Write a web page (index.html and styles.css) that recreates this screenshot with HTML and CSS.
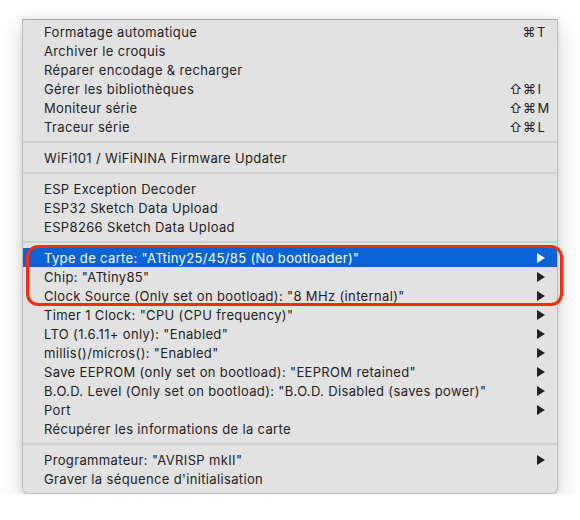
FILE: index.html
```html
<!DOCTYPE html>
<html lang="fr">
<head>
<meta charset="utf-8">
<title>Menu Outils</title>
<link rel="stylesheet" href="styles.css">
</head>
<body>
<div class="menu">
  <div class="item"><span class="label">Formatage automatique</span><span class="key"><span class="mods">⌘</span><span class="k">T</span></span></div>
  <div class="item"><span class="label">Archiver le croquis</span></div>
  <div class="item"><span class="label">Réparer encodage &amp; recharger</span></div>
  <div class="item"><span class="label">Gérer les bibliothèques</span><span class="key"><span class="mods">⇧⌘</span><span class="k">I</span></span></div>
  <div class="item"><span class="label">Moniteur série</span><span class="key"><span class="mods">⇧⌘</span><span class="k">M</span></span></div>
  <div class="item"><span class="label">Traceur série</span><span class="key"><span class="mods">⇧⌘</span><span class="k">L</span></span></div>
  <div class="sep"></div>
  <div class="item"><span class="label">WiFi101 / WiFiNINA Firmware Updater</span></div>
  <div class="sep"></div>
  <div class="item"><span class="label">ESP Exception Decoder</span></div>
  <div class="item"><span class="label">ESP32 Sketch Data Upload</span></div>
  <div class="item"><span class="label">ESP8266 Sketch Data Upload</span></div>
  <div class="sep"></div>
  <div class="group">
    <div class="item active"><span class="label">Type de carte: "ATtiny25/45/85 (No bootloader)"</span><svg class="arrow" viewBox="0 0 8 10"><path d="M0 0L8 5L0 10Z"/></svg></div>
    <div class="item"><span class="label">Chip: "ATtiny85"</span><svg class="arrow" viewBox="0 0 8 10"><path d="M0 0L8 5L0 10Z"/></svg></div>
    <div class="item"><span class="label">Clock Source (Only set on bootload): "8 MHz (internal)"</span><svg class="arrow" viewBox="0 0 8 10"><path d="M0 0L8 5L0 10Z"/></svg></div>
  </div>
  <div class="item"><span class="label">Timer 1 Clock: "CPU (CPU frequency)"</span><svg class="arrow" viewBox="0 0 8 10"><path d="M0 0L8 5L0 10Z"/></svg></div>
  <div class="item"><span class="label">LTO (1.6.11+ only): "Enabled"</span><svg class="arrow" viewBox="0 0 8 10"><path d="M0 0L8 5L0 10Z"/></svg></div>
  <div class="item"><span class="label">millis()/micros(): "Enabled"</span><svg class="arrow" viewBox="0 0 8 10"><path d="M0 0L8 5L0 10Z"/></svg></div>
  <div class="item"><span class="label">Save EEPROM (only set on bootload): "EEPROM retained"</span><svg class="arrow" viewBox="0 0 8 10"><path d="M0 0L8 5L0 10Z"/></svg></div>
  <div class="item"><span class="label">B.O.D. Level (Only set on bootload): "B.O.D. Disabled (saves power)"</span><svg class="arrow" viewBox="0 0 8 10"><path d="M0 0L8 5L0 10Z"/></svg></div>
  <div class="item"><span class="label">Port</span><svg class="arrow" viewBox="0 0 8 10"><path d="M0 0L8 5L0 10Z"/></svg></div>
  <div class="item"><span class="label">Récupérer les informations de la carte</span></div>
  <div class="sep"></div>
  <div class="item"><span class="label">Programmateur: "AVRISP mkII"</span><svg class="arrow" viewBox="0 0 8 10"><path d="M0 0L8 5L0 10Z"/></svg></div>
  <div class="item"><span class="label">Graver la séquence d'initialisation</span></div>
</div>
</body>
</html>
```
FILE: styles.css
```css
html, body {
  margin: 0;
  padding: 0;
  background: #ffffff;
}
body {
  padding: 19px 0 0 22px;
  font-family: "Inter", "Liberation Sans", sans-serif;
  font-size: 13px;
  color: #222222;
}
.menu {
  width: 536px;
  box-sizing: border-box;
  background: #e2e2e2;
  border: 1px solid #bdbdbd;
  border-top-color: #a9a9a9;
  border-radius: 0 0 6px 6px;
  padding: 2px 0 5px;
  box-shadow: 0 8px 24px rgba(0, 0, 0, 0.18), 0 0 6px rgba(0, 0, 0, 0.08);
}
.item {
  height: 19px;
  display: flex;
  align-items: center;
  padding: 0 8px 0 21px;
  white-space: nowrap;
  letter-spacing: 0.35px;
}
.item .label {
  flex: 1;
}
.key {
  display: flex;
  width: 40px;
  letter-spacing: 0.5px;
}
.mods {
  flex: 1;
  text-align: right;
}
.k {
  width: 12px;
  padding-left: 1px;
  letter-spacing: 0;
}
.arrow {
  width: 8px;
  height: 10px;
  margin-right: 4px;
  fill: #222222;
}
.item.active {
  background: #0a64d8;
  color: #ffffff;
}
.item.active .arrow {
  fill: #ffffff;
}
.sep {
  height: 12px;
  display: flex;
  align-items: center;
}
.sep::before {
  content: "";
  flex: 1;
  height: 2px;
  background: #d0d0d0;
}
.group {
  position: relative;
}
.group::after {
  content: "";
  position: absolute;
  left: 3px;
  right: -6px;
  top: -3px;
  bottom: -1px;
  border: 3px solid #ff2a0a;
  border-radius: 12px;
  pointer-events: none;
}
```
